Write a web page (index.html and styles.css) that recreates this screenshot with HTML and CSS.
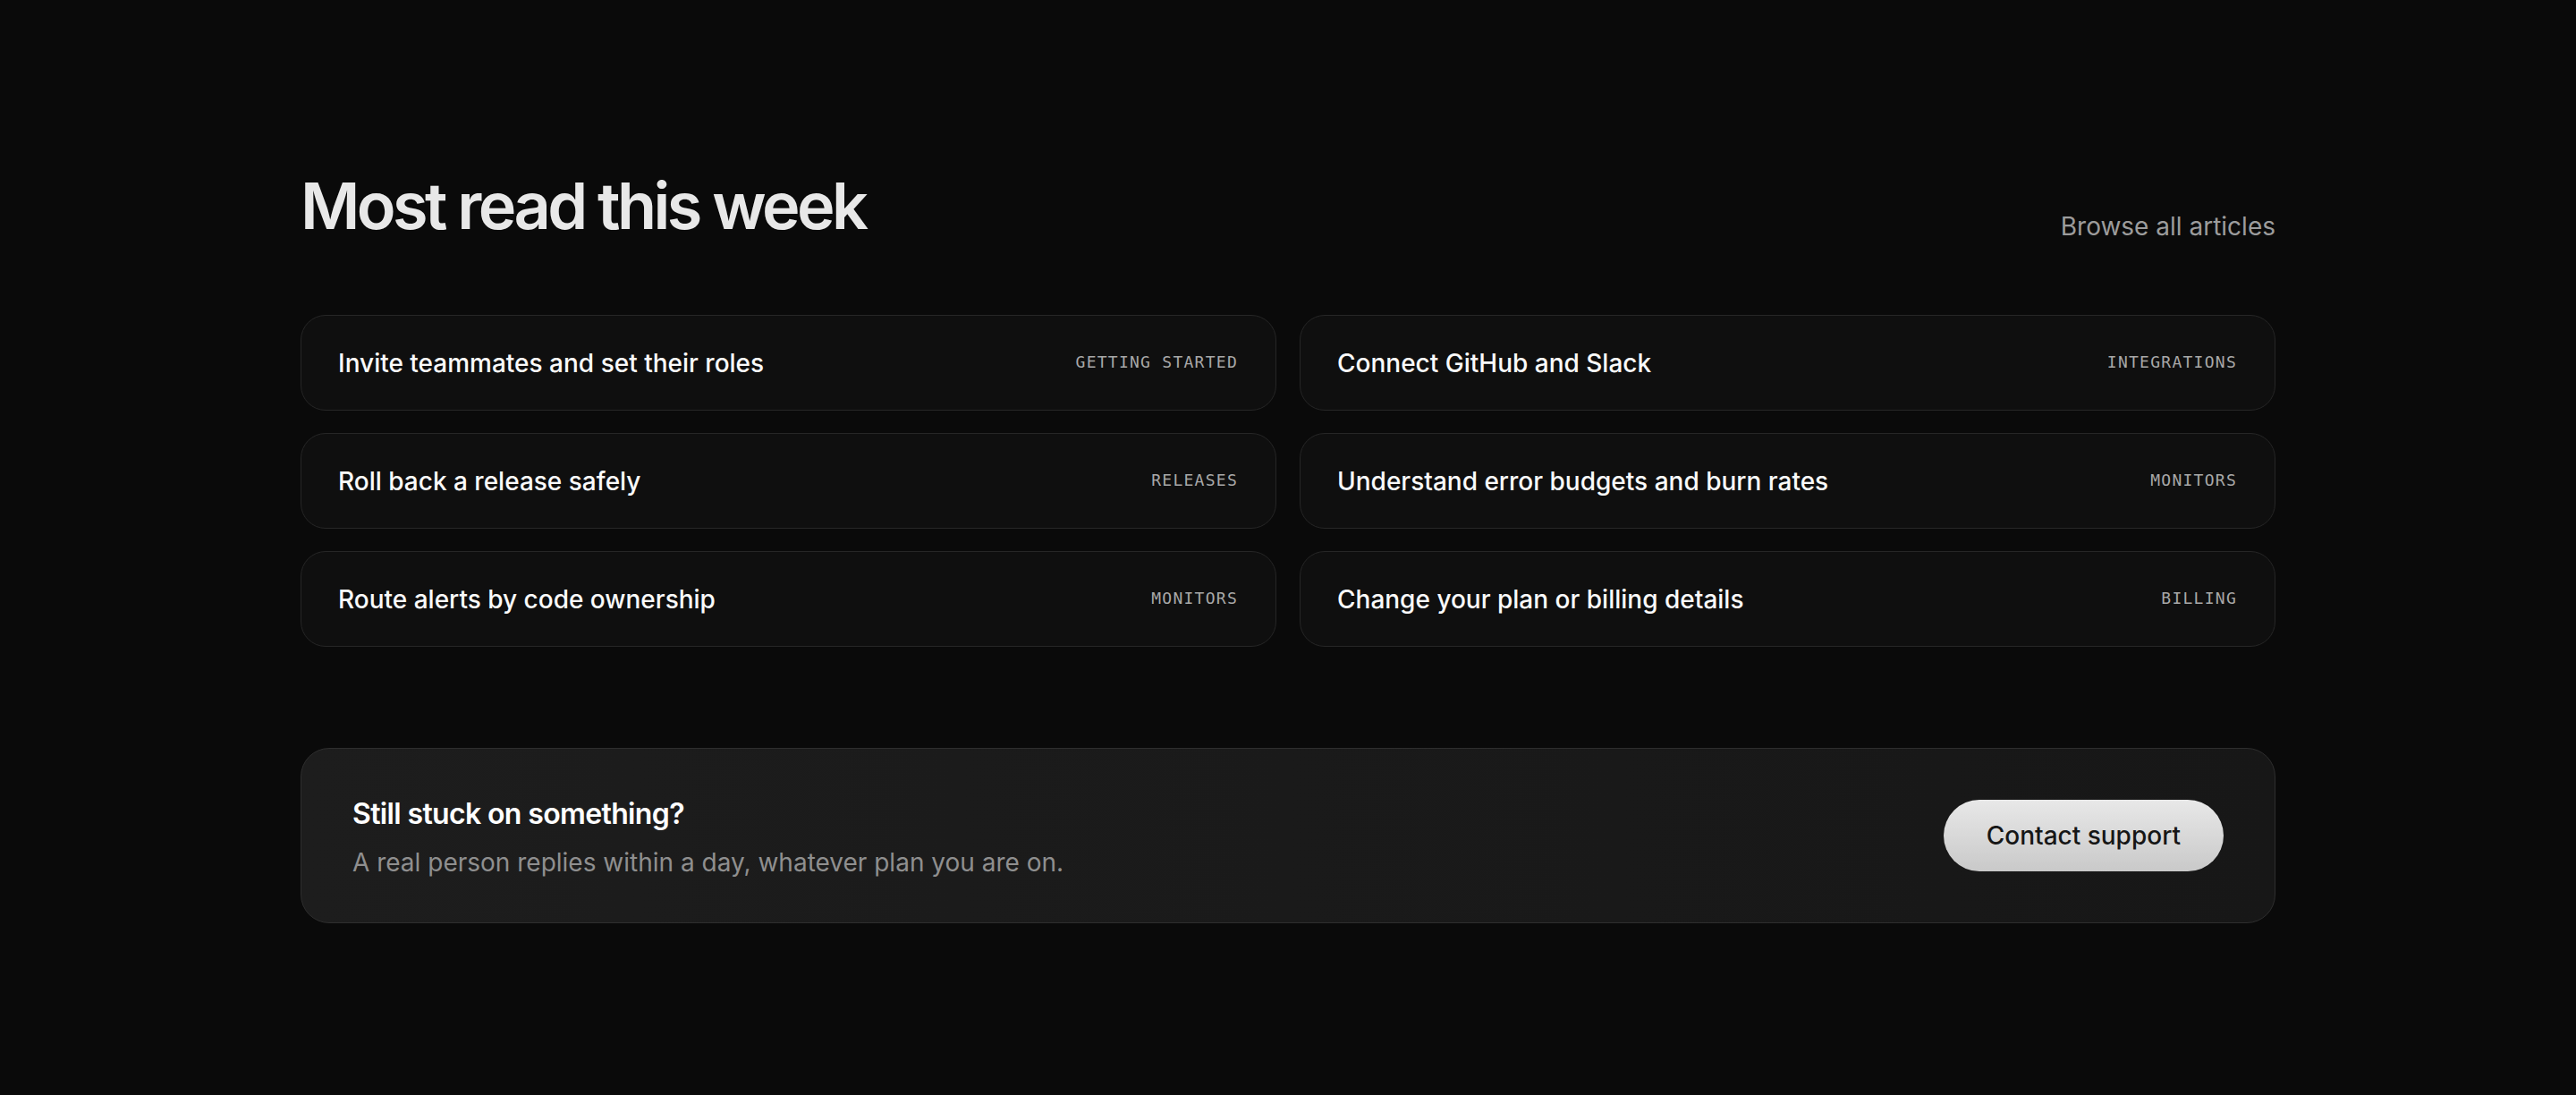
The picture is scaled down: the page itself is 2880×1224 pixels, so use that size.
FILE: index.html
```html
<!DOCTYPE html>
<html lang="en">
<head>
  <meta charset="UTF-8">
  <meta name="viewport" content="width=device-width, initial-scale=1">
  <title>Help center</title>
  <link rel="stylesheet" href="styles.css">
</head>
<body>

<main class="wrap">
  <div class="head">
    <h2>Most read this week</h2>
    <a class="browse" href="#">Browse all articles</a>
  </div>

  <div class="articles">
    <a class="article" href="#"><span>Invite teammates and set their roles</span><span class="tag">Getting started</span></a>
    <a class="article" href="#"><span>Connect GitHub and Slack</span><span class="tag">Integrations</span></a>
    <a class="article" href="#"><span>Roll back a release safely</span><span class="tag">Releases</span></a>
    <a class="article" href="#"><span>Understand error budgets and burn rates</span><span class="tag">Monitors</span></a>
    <a class="article" href="#"><span>Route alerts by code ownership</span><span class="tag">Monitors</span></a>
    <a class="article" href="#"><span>Change your plan or billing details</span><span class="tag">Billing</span></a>
  </div>

  <div class="help">
    <div>
      <h3>Still stuck on something?</h3>
      <p>A real person replies within a day, whatever plan you are on.</p>
    </div>
    <a class="btn" href="#">Contact support</a>
  </div>
</main>

</body>
</html>
```

FILE: styles.css
```css
body { margin: 0; background: #0a0a0a; color: #f5f5f5; font-family: Inter, "Noto Sans", sans-serif; }
a { text-decoration: none; color: inherit; }

.wrap { max-width: 2208px; margin: 0 auto; padding: 190px 0 150px; }

.head { display: flex; justify-content: space-between; align-items: flex-end; margin-bottom: 83px; }
.head h2 {
  margin: 0;
  font-size: 72px;
  line-height: 1.1;
  font-weight: 600;
  letter-spacing: -0.05em;
  color: #e8e8e8;
}
.browse { font-size: 28px; line-height: 1.15; color: #9c9c9c; }

.articles { display: grid; grid-template-columns: 1fr 1fr; gap: 25px 26px; }
.article {
  display: flex;
  justify-content: space-between;
  align-items: center;
  height: 107px;
  box-sizing: border-box;
  padding: 0 42px 0 41px;
  background: #0f0f0f;
  border: 1px solid #262626;
  border-radius: 28px;
  font-size: 28px;
  font-weight: 500;
  color: #fafafa;
}
.tag {
  margin-top: -2px;
  font-family: "DejaVu Sans Mono", monospace;
  font-size: 18px;
  font-weight: 400;
  letter-spacing: 0.07em;
  text-transform: uppercase;
  color: #a8a8a8;
}

.help {
  display: flex;
  justify-content: space-between;
  align-items: center;
  margin-top: 113px;
  padding: 52px 57px 46px;
  background: linear-gradient(90deg, #1d1d1d, #171717);
  border: 1px solid #2e2e2e;
  border-radius: 32px;
}
.help h3 { margin: 0 0 12px; font-size: 32px; line-height: 1.3; font-weight: 600; letter-spacing: -0.02em; color: #fff; }
.help p { margin: 0; font-size: 28px; line-height: 1.5; color: #8f8f8f; }
.btn {
  margin-top: -6px;
  padding: 23px 48px;
  border-radius: 999px;
  background: linear-gradient(180deg, #e8e8e8, #c9c9c9);
  color: #161616;
  font-size: 28px;
  line-height: 34px;
  font-weight: 500;
}
```
